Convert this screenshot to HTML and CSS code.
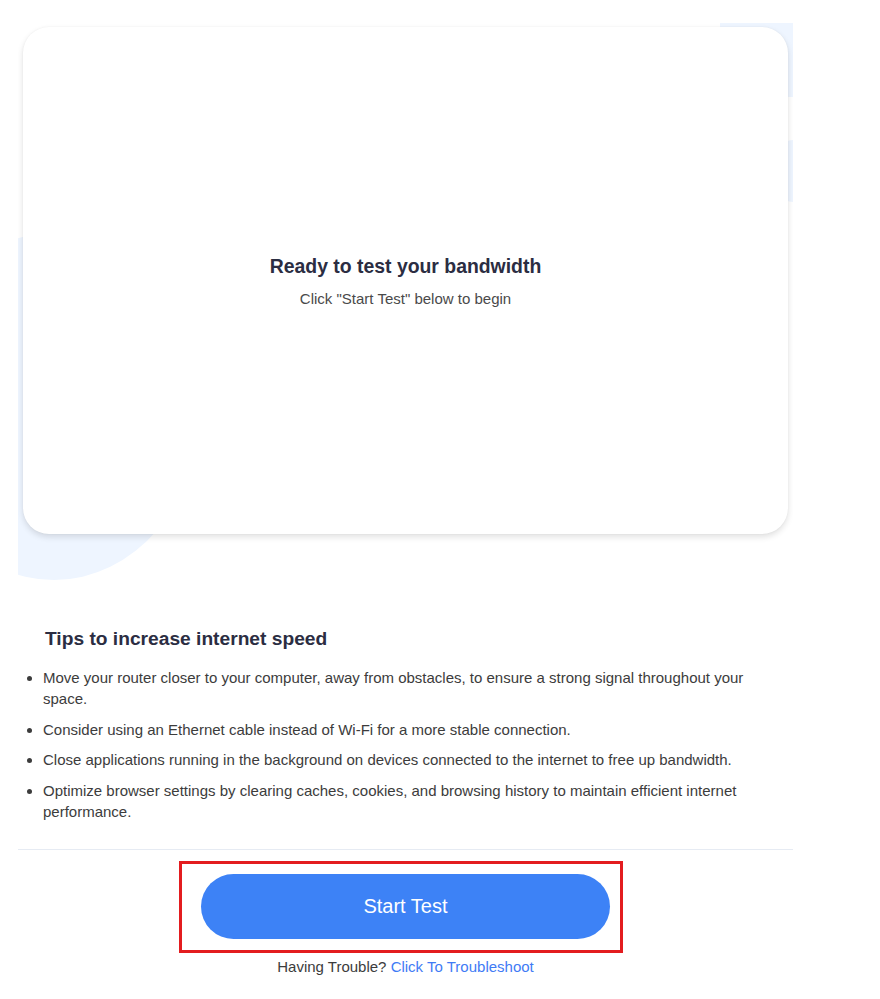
FILE: index.html
```html
<!DOCTYPE html>
<html lang="en">
<head>
    <meta charset="UTF-8">
    <meta name="viewport" content="width=device-width, initial-scale=1.0">
    <title>Bandwidth Test</title>
    <link rel="stylesheet" href="styles.css">
</head>
<body>
    <div class="page">
        <div class="hero">
            <span class="blob blob-top"></span>
            <span class="blob blob-side"></span>
            <span class="blob blob-left"></span>
            <div class="card">
                <h2>Ready to test your bandwidth</h2>
                <p>Click "Start Test" below to begin</p>
            </div>
        </div>

        <div class="tips">
            <h3>Tips to increase internet speed</h3>
            <ul>
                <li>Move your router closer to your computer, away from obstacles, to ensure a strong signal throughout your space.</li>
                <li>Consider using an Ethernet cable instead of Wi-Fi for a more stable connection.</li>
                <li>Close applications running in the background on devices connected to the internet to free up bandwidth.</li>
                <li>Optimize browser settings by clearing caches, cookies, and browsing history to maintain efficient internet performance.</li>
            </ul>
        </div>

        <div class="actions">
            <div class="highlight">
                <button type="button" class="start-btn">Start Test</button>
            </div>
            <p class="trouble">Having Trouble? <a href="#">Click To Troubleshoot</a></p>
        </div>
    </div>
</body>
</html>
```

FILE: styles.css
```css
body {
    font-family: "Liberation Sans", Arial, sans-serif;
    background-color: #ffffff;
    margin: 0;
    padding: 23px 0 0 18px;
}
.page {
    width: 775px;
    overflow: hidden;
}
.hero {
    position: relative;
    padding: 4px 5px 46px 5px;
}
.blob {
    position: absolute;
    background-color: #eef5ff;
}
.blob-top {
    top: 0;
    right: 0;
    width: 73px;
    height: 74px;
}
.blob-side {
    top: 117px;
    right: -20px;
    width: 40px;
    height: 62px;
    border-radius: 50%;
}
.blob-left {
    top: 210px;
    left: -111px;
    width: 294px;
    height: 347px;
    border-radius: 50%;
}
.card {
    position: relative;
    height: 507px;
    background-color: #ffffff;
    border-radius: 26px;
    box-shadow: 0 3px 6px rgba(0, 0, 0, 0.12), 0 0 2px rgba(0, 0, 0, 0.05);
    display: flex;
    flex-direction: column;
    align-items: center;
    justify-content: center;
}
.card h2 {
    margin: 0 0 12px 0;
    font-size: 19.4px;
    color: #2b2d42;
}
.card p {
    margin: 0;
    font-size: 15px;
    color: #4a4a4a;
}
.tips {
    padding: 0 20px 0 0;
    margin-top: 48px;
}
.tips h3 {
    margin: 0 0 17px 27px;
    font-size: 19.2px;
    color: #2b2d42;
}
.tips ul {
    margin: 0;
    padding-left: 25px;
    color: #3c3c3c;
    font-size: 15px;
    line-height: 21px;
}
.tips li {
    margin-bottom: 9.5px;
}
.actions {
    border-top: 1px solid #e6ebf3;
    margin-top: 27px;
    padding-top: 11px;
}
.highlight {
    width: fit-content;
    margin-left: 161px;
    border: 3px solid #e31c1f;
    padding: 10px 10px 11px 19px;
}
.start-btn {
    display: block;
    width: 409px;
    height: 65px;
    border: none;
    border-radius: 33px;
    background-color: #3d82f6;
    color: #ffffff;
    font-family: "Liberation Sans", Arial, sans-serif;
    font-size: 20px;
    cursor: pointer;
}
.trouble {
    margin: 5px 0 0 0;
    text-align: center;
    font-size: 15px;
    color: #3c3c3c;
}
.trouble a {
    color: #3f7bf5;
    text-decoration: none;
}
```
